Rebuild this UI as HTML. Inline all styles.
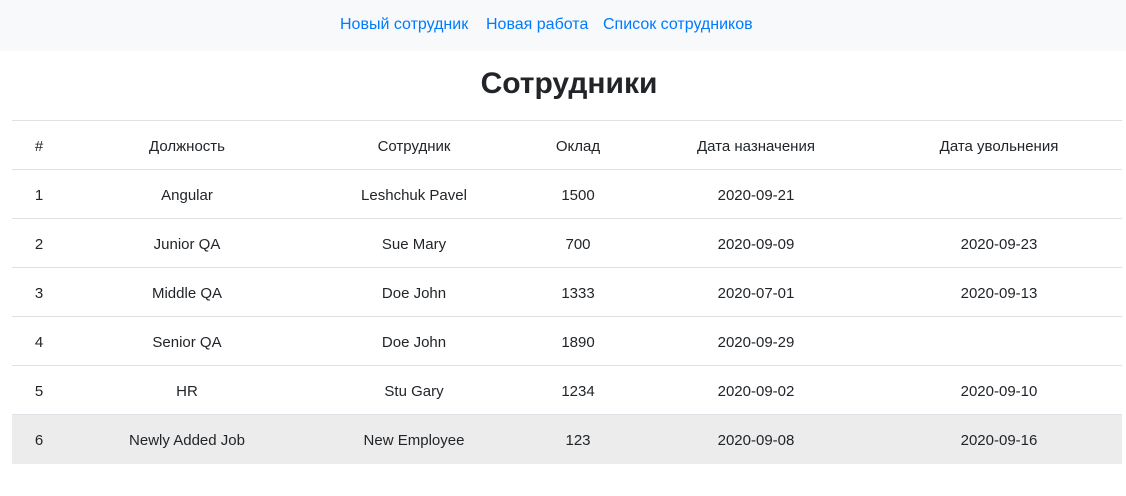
<!DOCTYPE html>
<html><head><meta charset="utf-8"><style>
html,body{margin:0;padding:0;background:#fff;width:1126px;height:496px;overflow:hidden}
body{font-family:"Liberation Sans","DejaVu Sans",sans-serif;color:#212529;font-size:15px}
.nav{height:51px;background:#f8f9fa;position:relative}
.nav a{position:absolute;top:16px;color:#007bff;text-decoration:none;font-size:16px;white-space:nowrap}
h1{margin:0;position:absolute;top:63px;left:6px;width:1126px;text-align:center;font-size:30px;font-weight:bold;line-height:42px}
table{position:absolute;left:12px;top:120px;width:1110px;border-collapse:collapse;table-layout:fixed}
td{height:48px;border-top:1px solid #dee2e6;text-align:center;padding:2px 0 0;font-size:15px;box-sizing:border-box;height:49px}
tr.h td{background:#ececec}
</style></head><body>
<div class="nav">
<a style="left:340px">Новый сотрудник</a>
<a style="left:486px">Новая работа</a>
<a style="left:603px">Список сотрудников</a>
</div>
<h1>Сотрудники</h1>
<table>
<colgroup><col style="width:54px"><col style="width:242px"><col style="width:212px"><col style="width:116px"><col style="width:240px"><col style="width:246px"></colgroup>
<tr><td>#</td><td>Должность</td><td>Сотрудник</td><td>Оклад</td><td>Дата назначения</td><td>Дата увольнения</td></tr>
<tr><td>1</td><td>Angular</td><td>Leshchuk Pavel</td><td>1500</td><td>2020-09-21</td><td></td></tr>
<tr><td>2</td><td>Junior QA</td><td>Sue Mary</td><td>700</td><td>2020-09-09</td><td>2020-09-23</td></tr>
<tr><td>3</td><td>Middle QA</td><td>Doe John</td><td>1333</td><td>2020-07-01</td><td>2020-09-13</td></tr>
<tr><td>4</td><td>Senior QA</td><td>Doe John</td><td>1890</td><td>2020-09-29</td><td></td></tr>
<tr><td>5</td><td>HR</td><td>Stu Gary</td><td>1234</td><td>2020-09-02</td><td>2020-09-10</td></tr>
<tr class="h"><td>6</td><td>Newly Added Job</td><td>New Employee</td><td>123</td><td>2020-09-08</td><td>2020-09-16</td></tr>
</table>
</body></html>
